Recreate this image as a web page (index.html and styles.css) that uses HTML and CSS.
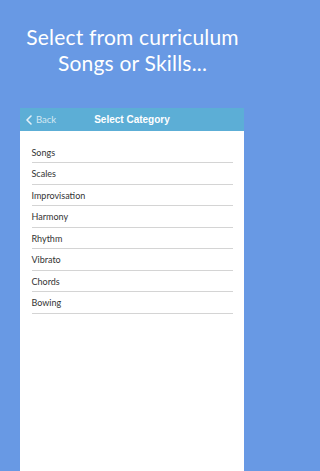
FILE: index.html
```html
<!DOCTYPE html>
<html>
<head>
<meta charset="utf-8">
<link rel="stylesheet" href="styles.css">
</head>
<body>
<div class="screen">
  <h1 class="headline">Select from curriculum<br>Songs or Skills...</h1>
  <div class="panel">
    <div class="navbar">
      <div class="back">
        <svg class="chev" width="6" height="10" viewBox="0 0 6 10"><path d="M5 1 L1 5 L5 9" fill="none" stroke="#e3f0f8" stroke-width="1.6" stroke-linecap="round" stroke-linejoin="round"/></svg>
        <span>Back</span>
      </div>
      <div class="navtitle">Select Category</div>
    </div>
    <ul class="list">
      <li>Songs</li>
      <li>Scales</li>
      <li>Improvisation</li>
      <li>Harmony</li>
      <li>Rhythm</li>
      <li>Vibrato</li>
      <li>Chords</li>
      <li>Bowing</li>
    </ul>
  </div>
</div>
</body>
</html>
```
FILE: styles.css
```css
html, body {
  margin: 0;
  padding: 0;
  height: 100%;
}
body {
  background: #6899e4;
  font-family: "Lato", "Open Sans", sans-serif;
}
.screen {
  width: 265px;
  height: 471px;
  display: flex;
  flex-direction: column;
  overflow: hidden;
}
.headline {
  margin: 0;
  padding-top: 24px;
  height: 108px;
  flex: none;
  box-sizing: border-box;
  text-align: center;
  color: #ffffff;
  font-weight: 400;
  font-size: 21px;
  line-height: 26px;
  letter-spacing: 0.2px;
}
.panel {
  margin: 0 21px 0 20px;
  flex: 1;
  background: #ffffff;
  display: flex;
  flex-direction: column;
}
.navbar {
  height: 23px;
  flex: none;
  background: #5caed6;
  position: relative;
  display: flex;
  align-items: center;
  justify-content: center;
}
.back {
  position: absolute;
  left: 6px;
  top: 0;
  height: 23px;
  display: flex;
  align-items: center;
  gap: 4px;
  color: #d4e8f3;
  font-size: 9.5px;
}
.chev {
  display: block;
}
.navtitle {
  color: #ffffff;
  font-weight: 700;
  font-size: 10px;
  font-family: "Liberation Sans", sans-serif;
}
.list {
  list-style: none;
  margin: 0;
  padding: 10.5px 11px 0 11.5px;
}
.list li {
  height: 21.5px;
  box-sizing: border-box;
  border-bottom: 1px solid #d4d4d4;
  font-size: 9px;
  color: #333333;
  display: flex;
  align-items: center;
  padding-top: 1px;
}
```
